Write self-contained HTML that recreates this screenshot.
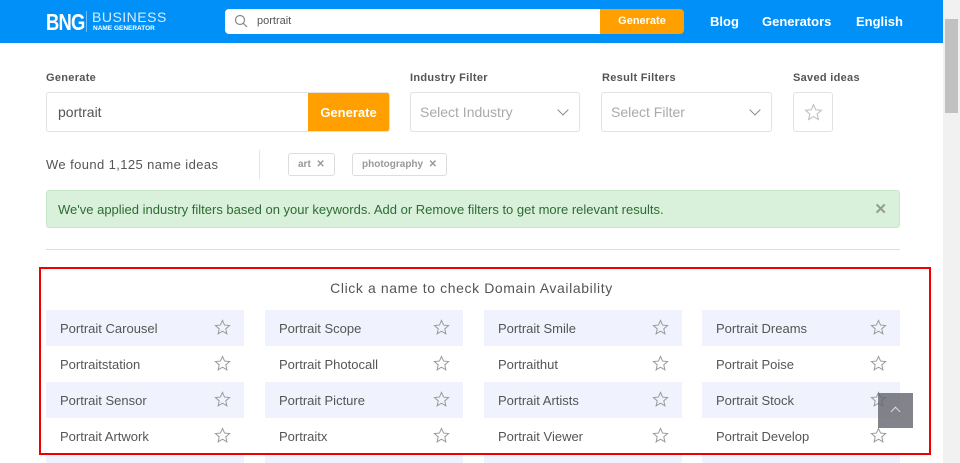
<!DOCTYPE html><html><head><style>
*{box-sizing:border-box;margin:0;padding:0}
html,body{width:960px;height:463px;overflow:hidden}
body{font-family:"Liberation Sans",sans-serif;background:#fff;position:relative;color:#555}
.hdr{position:absolute;left:0;top:0;width:943px;height:43px;background:#0090f7}
.abs{position:absolute}
.lbl{position:absolute;top:72px;font-size:11px;font-weight:bold;color:#555;letter-spacing:.3px}
.box{position:absolute;top:92px;height:40px;border:1px solid #e2e2e2;border-radius:3px;background:#fff}
.sel{font-size:14px;color:#aaa;padding:11px 9px}
.chev{position:absolute;right:12px;top:13px;width:8px;height:8px;border-right:1.5px solid #888;border-bottom:1.5px solid #888;transform:rotate(45deg)}
.tag{position:absolute;top:153px;height:23px;border:1px solid #ddd;border-radius:3px;font-size:10px;font-weight:bold;color:#999;padding:5px 9px}
.cell{position:absolute;width:198px;height:36px;font-size:13px;color:#555;padding:11px 14px}
.sh{background:#f0f3fd}
.st{position:absolute;right:13px;top:9px}
</style></head><body>
<div class="hdr">
<div class="abs" style="left:46px;top:9px;color:#fff;font-size:23px;font-weight:bold;letter-spacing:-1px;transform:scaleX(.8);transform-origin:left">BNG</div>
<div class="abs" style="left:86px;top:11px;width:1px;height:21px;background:#6bbcf9"></div>
<div class="abs" style="left:92px;top:9px;color:#d8ecff;font-size:14px;letter-spacing:.5px">BUSINESS</div>
<div class="abs" style="left:93px;top:25px;color:#fff;font-size:6.5px;font-weight:bold">NAME GENERATOR</div>
<div class="abs" style="left:225px;top:9px;width:375px;height:25px;background:#fff;border-radius:4px 0 0 4px"></div>
<svg class="abs" style="left:234px;top:14px" width="14" height="14" viewBox="0 0 14 14"><circle cx="6" cy="6" r="4.5" fill="none" stroke="#888" stroke-width="1.2"/><path d="M9.3 9.3L13 13" stroke="#888" stroke-width="1.2"/></svg>
<div class="abs" style="left:257px;top:15px;font-size:11px;color:#555">portrait</div>
<div class="abs" style="left:600px;top:9px;width:84px;height:25px;background:#ffa000;border-radius:0 4px 4px 0;color:#fff;font-size:11px;font-weight:bold;text-align:center;padding-top:6px">Generate</div>
<div class="abs" style="left:710px;top:14px;color:#fff;font-size:13px;font-weight:bold">Blog</div>
<div class="abs" style="left:762px;top:14px;color:#fff;font-size:13px;font-weight:bold">Generators</div>
<div class="abs" style="left:856px;top:14px;color:#fff;font-size:13px;font-weight:bold">English</div>
</div>
<div class="abs" style="left:943px;top:0;width:17px;height:463px;background:#f1f1f1"></div>
<div class="abs" style="left:945px;top:19px;width:13px;height:94px;background:#c1c1c1"></div>
<div class="lbl" style="left:46px">Generate</div>
<div class="lbl" style="left:410px">Industry Filter</div>
<div class="lbl" style="left:602px">Result Filters</div>
<div class="lbl" style="left:793px">Saved ideas</div>
<div class="box" style="left:46px;width:344px;overflow:hidden"><div style="padding:11px 11px;font-size:14px;color:#555">portrait</div><div class="abs" style="right:0;top:0;width:81px;height:40px;background:#ffa000;color:#fff;font-size:13px;font-weight:bold;text-align:center;padding-top:12px">Generate</div></div>
<div class="box sel" style="left:410px;width:170px">Select Industry<div class="chev"></div></div>
<div class="box sel" style="left:601px;width:171px">Select Filter<div class="chev"></div></div>
<div class="box" style="left:793px;width:40px"><svg class="abs" style="left:10px;top:10px" width="19" height="19" viewBox="0 0 24 24"><path d="M12 2l2.9 6.6 7.1.6-5.4 4.7 1.6 7-6.2-3.7-6.2 3.7 1.6-7L2 9.2l7.1-.6z" fill="none" stroke="#bbb" stroke-width="1.3"/></svg></div>
<div class="abs" style="left:46px;top:157px;font-size:13px;color:#555;letter-spacing:.4px">We found 1,125 name ideas</div>
<div class="abs" style="left:259px;top:150px;width:1px;height:29px;background:#e5e5e5"></div>
<div class="tag" style="left:288px">art &nbsp;✕</div>
<div class="tag" style="left:352px">photography &nbsp;✕</div>
<div class="abs" style="left:46px;top:190px;width:854px;height:38px;background:#d9f0da;border:1px solid #c8e6c9;border-radius:3px;color:#2e6b34;font-size:13px;padding:11px 11px">We've applied industry filters based on your keywords. Add or Remove filters to get more relevant results.<span style="position:absolute;right:12px;top:9px;color:#999;font-size:15px;font-weight:bold">✕</span></div>
<div class="abs" style="left:46px;top:249px;width:854px;height:1px;background:#ddd"></div>
<div class="abs" style="left:0;top:280px;width:943px;text-align:center;font-size:14px;color:#555;letter-spacing:.6px">Click a name to check Domain Availability</div>
<div id="g"></div>
<div class="abs" style="left:39px;top:267px;width:892px;height:188px;border:2px solid #e00;z-index:2"></div>
<script>
var n=[["Portrait Carousel","Portrait Scope","Portrait Smile","Portrait Dreams"],["Portraitstation","Portrait Photocall","Portraithut","Portrait Poise"],["Portrait Sensor","Portrait Picture","Portrait Artists","Portrait Stock"],["Portrait Artwork","Portraitx","Portrait Viewer","Portrait Develop"],["","","",""]];
var xs=[46,265,484,702],h="";
var star='<svg class="st" width="17" height="17" viewBox="0 0 24 24"><path d="M12 2l2.9 6.6 7.1.6-5.4 4.7 1.6 7-6.2-3.7-6.2 3.7 1.6-7L2 9.2l7.1-.6z" fill="none" stroke="#999" stroke-width="1.4"/></svg>';
for(var r=0;r<5;r++)for(var c=0;c<4;c++){h+='<div class="cell'+(r%2==0?' sh':'')+'" style="left:'+xs[c]+'px;top:'+(310+r*36)+'px'+(r==4?';height:9px;padding:0':'')+'">'+n[r][c]+(n[r][c]?star:'')+'</div>';}
document.getElementById('g').innerHTML=h;
</script>
<div class="abs" style="left:878px;top:393px;width:35px;height:35px;background:rgba(100,100,110,.8);z-index:3"><div class="abs" style="left:14px;top:15px;width:7px;height:7px;border-left:1.5px solid #ddd;border-top:1.5px solid #ddd;transform:rotate(45deg)"></div></div>
</body></html>
